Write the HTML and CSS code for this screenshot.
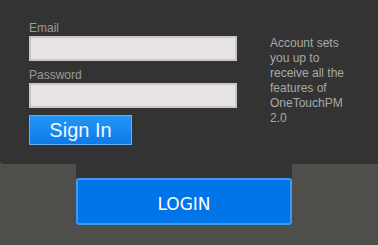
FILE: index.html
```html
<!DOCTYPE html>
<html lang="en">
<head>
    <meta charset="UTF-8">
    <meta name="viewport" content="width=device-width, initial-scale=1.0">
    <title>OneTouchPM Sign In</title>
    <link rel="stylesheet" href="styles.css">
</head>
<body>
    <div class="panel">
        <form class="signin-form">
            <label class="field-label" for="email">Email</label>
            <input type="text" id="email" class="field-input">
            <label class="field-label" for="password">Password</label>
            <input type="password" id="password" class="field-input">
            <button type="button" class="signin-btn">Sign In</button>
        </form>
        <div class="info">Account sets you up to receive all the features of OneTouchPM 2.0</div>
    </div>
    <div class="login-tab">
        <button type="button" class="login-btn">LOGIN</button>
    </div>
</body>
</html>
```

FILE: styles.css
```css
:root {
    --panel-dark: #333333;
    --page-gray: #4e4e4a;
    --label-gray: #9c9c9c;
    --text-gray: #a9a9a9;
    --blue: #0075ea;
}

body {
    margin: 0;
    padding: 0;
    background-color: var(--page-gray);
    font-family: 'Liberation Sans', Arial, sans-serif;
    font-size: 12px;
}

.panel {
    display: flex;
    height: 164px;
    box-sizing: border-box;
    padding: 21px 0 0 29px;
    background-color: var(--panel-dark);
    border-bottom-left-radius: 4px;
}

.signin-form {
    display: flex;
    flex-direction: column;
    align-items: flex-start;
    width: 208px;
    margin: 0;
}

.field-label {
    color: var(--label-gray);
    line-height: 14px;
    margin-bottom: 1px;
}

.field-input {
    width: 208px;
    height: 25px;
    box-sizing: border-box;
    margin: 0 0 7px 0;
    border: 2px solid #c9c7c6;
    background-color: #e6e3e2;
    padding: 0 4px;
    font-family: inherit;
}

.signin-btn {
    width: 103px;
    height: 30px;
    box-sizing: border-box;
    margin: 0;
    padding: 0 0 1px 0;
    border: 1px solid #62b0f7;
    background: linear-gradient(#2496f6, #0a7be9);
    color: #eef7ff;
    font-family: inherit;
    font-size: 20px;
    line-height: 26px;
    cursor: pointer;
}

.info {
    width: 80px;
    margin-left: 33px;
    padding-top: 15px;
    color: var(--text-gray);
    line-height: 15px;
}

.login-tab {
    width: 216px;
    margin-left: 76px;
    padding-top: 14px;
    background-color: var(--panel-dark);
    border-radius: 0 0 3px 3px;
}

.login-btn {
    display: block;
    width: 100%;
    height: 47px;
    box-sizing: border-box;
    margin: 0;
    padding: 4px 0 0 0;
    border: 2px solid #3f98f2;
    border-radius: 3px;
    background-color: var(--blue);
    color: #ffffff;
    font-family: 'DejaVu Sans', Verdana, sans-serif;
    font-size: 17px;
    cursor: pointer;
}
```
